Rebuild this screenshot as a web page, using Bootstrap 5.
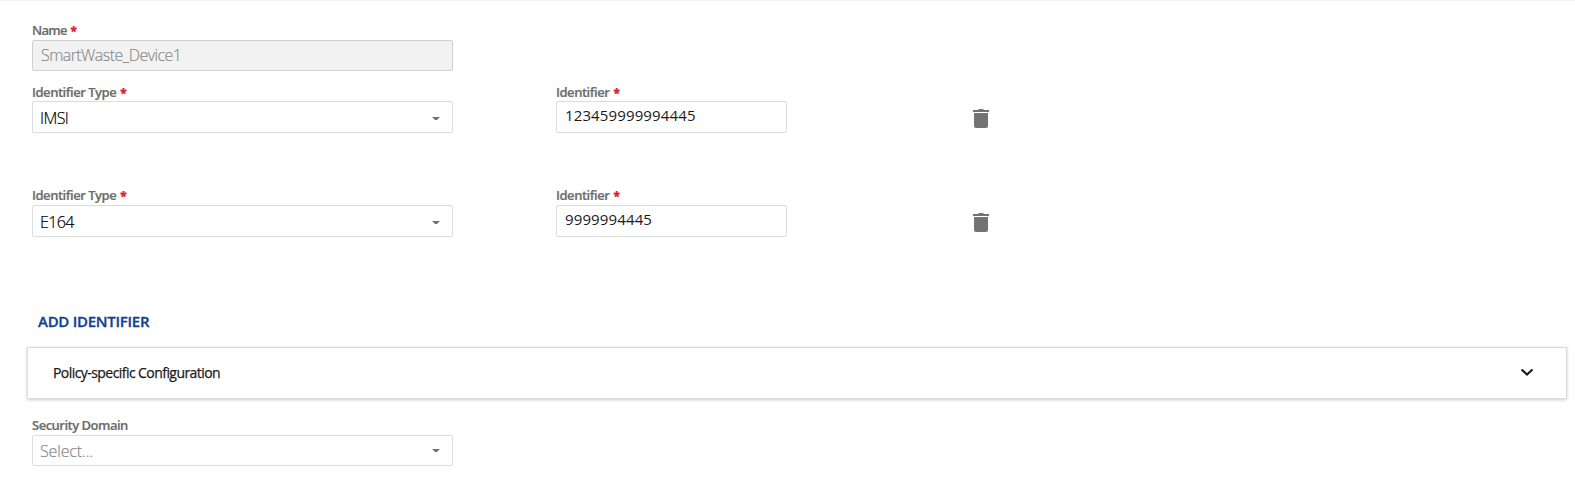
<!DOCTYPE html>
<html lang="en">
<head>
<meta charset="utf-8">
<title>Device</title>
<link href="https://cdn.jsdelivr.net/npm/bootstrap@5.3.0/dist/css/bootstrap.min.css" rel="stylesheet">
<style>
body{font-family:"Open Sans","Noto Sans",sans-serif;color:#1a1a1a;height:502px;overflow:hidden;border-top:1px solid #f4f4f4}
.device-form{padding:20px 8px 0 27px}
.fields{padding-left:5px}
.type-col{width:421px}
.id-col{width:231px;margin-left:103px}
.form-label{display:block;font-size:13px;font-weight:600;-webkit-text-stroke:.2px;letter-spacing:-.47px;line-height:18px;height:18px;margin:0;color:#6c6c6c;white-space:nowrap}
.form-label b{color:#d9222a;font-size:12px;margin-left:1.2px}
.form-label.name-label{height:19px;letter-spacing:-.75px}
.form-control{height:32px;border:1px solid #dcdcdc;border-radius:2px;padding:0 8px;font-size:16px;line-height:22px;color:#1a1a1a;box-shadow:none}
.name-box{height:31px;letter-spacing:-.56px;padding-bottom:2px;-webkit-text-stroke:.15px}
.name-box:disabled{background:#f2f2f2;border-color:#d0d0d0;color:#888;opacity:1}
.picker{font-weight:300;color:#000;padding:2px 12px 0 7px;letter-spacing:-.6px;-webkit-text-stroke:.2px}
.number{font-size:15px;padding:0 9px 4px 8px;letter-spacing:.13px}
.short{height:31px;letter-spacing:-.15px;padding-top:0}
.placeholder-text{color:#888}
.trash{margin:26px 0 0 186px;width:16px;height:20px}
.row-one{margin-top:12px}
.row-two{margin-top:53px}
.row-two .form-label{height:19px}
.row-two .trash{margin-top:27px}
.add-btn{font-size:15px;font-weight:600;-webkit-text-stroke:.3px;letter-spacing:-.27px;line-height:22px;color:#124191;margin:73px 0 0 11px;padding:0;border:0;background:none;display:block}
.panel{height:52px;border:1px solid #dcdcdc;box-shadow:0 1px 3px rgba(0,0,0,.2);margin-top:15px;padding:0 32px 2px 25px;font-size:14px;background:#fff}
.panel-title{font-weight:500;letter-spacing:-.56px;-webkit-text-stroke:.25px #1a1a1a}
.domain{margin-top:17px}
.domain .form-label{height:19px;letter-spacing:-.5px}
</style>
</head>
<body>
<main class="device-form">
  <div class="fields">
    <div class="type-col">
      <label class="form-label name-label" for="name">Name <b>*</b></label>
      <input id="name" class="form-control name-box fw-light" value="SmartWaste_Device1" disabled>
    </div>
    <div class="d-flex row-one">
      <div class="type-col">
        <label class="form-label">Identifier Type <b>*</b></label>
        <div class="form-control picker d-flex align-items-center justify-content-between"><span>IMSI</span><svg width="8" height="3"><path d="M0 0h8L5 3H3z" fill="#737373"/></svg></div>
      </div>
      <div class="id-col">
        <label class="form-label" for="id1">Identifier <b>*</b></label>
        <input id="id1" class="form-control number" value="123459999994445">
      </div>
      <svg class="trash" viewBox="0 0 16 20"><path d="M0 1h5l1-1h4l1 1h5v2H0zM1 4h14v13q0 2-2 2H3q-2 0-2-2z" fill="#737373"/></svg>
    </div>
    <div class="d-flex row-two">
      <div class="type-col">
        <label class="form-label">Identifier Type <b>*</b></label>
        <div class="form-control picker d-flex align-items-center justify-content-between"><span>E164</span><svg width="8" height="3"><path d="M0 0h8L5 3H3z" fill="#737373"/></svg></div>
      </div>
      <div class="id-col">
        <label class="form-label" for="id2">Identifier <b>*</b></label>
        <input id="id2" class="form-control number" value="9999994445">
      </div>
      <svg class="trash" viewBox="0 0 16 20"><path d="M0 1h5l1-1h4l1 1h5v2H0zM1 4h14v13q0 2-2 2H3q-2 0-2-2z" fill="#737373"/></svg>
    </div>
  </div>
  <button class="add-btn" type="button">ADD IDENTIFIER</button>
  <section class="panel d-flex align-items-center justify-content-between">
    <span class="panel-title">Policy-specific Configuration</span>
    <svg width="14" height="9" viewBox="0 0 14 9"><path d="M1.5 1.5l5.5 5 5.5-5" fill="none" stroke="#1a1a1a" stroke-width="2.2"/></svg>
  </section>
  <div class="fields domain">
    <div class="type-col">
      <label class="form-label">Security Domain</label>
      <div class="form-control picker short d-flex align-items-center justify-content-between"><span class="placeholder-text">Select...</span><svg width="8" height="3"><path d="M0 0h8L5 3H3z" fill="#737373"/></svg></div>
    </div>
  </div>
</main>
<script src="https://cdn.jsdelivr.net/npm/bootstrap@5.3.0/dist/js/bootstrap.bundle.min.js"></script>
</body>
</html>
